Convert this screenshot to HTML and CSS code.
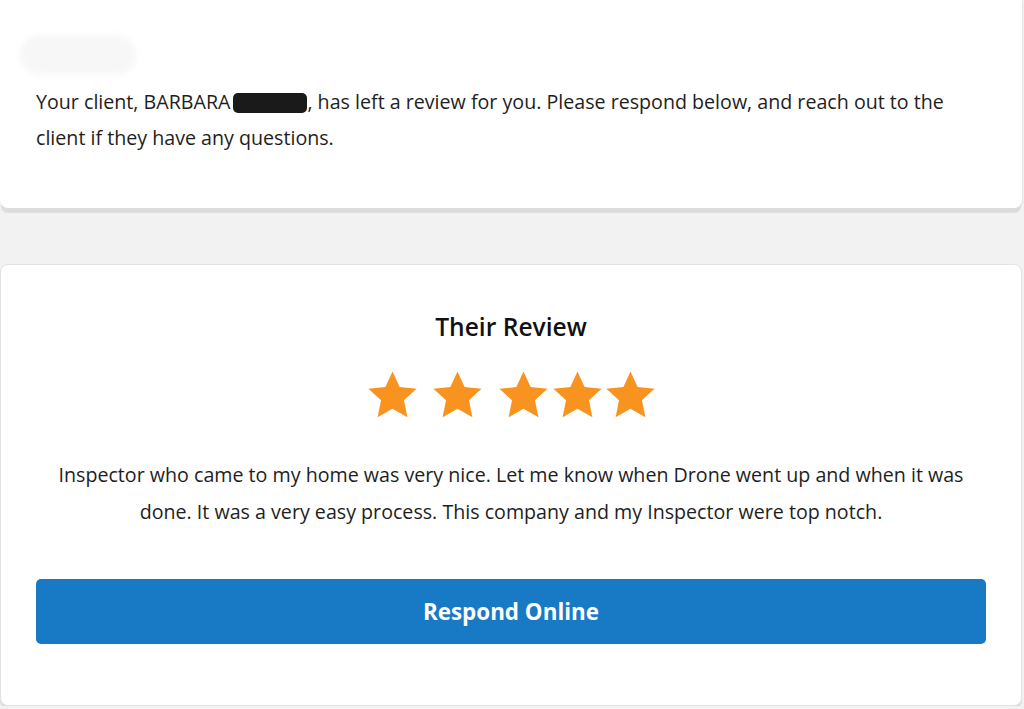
FILE: index.html
```html
<!DOCTYPE html>
<html lang="en">
<head>
<meta charset="utf-8">
<title>Review</title>
<link rel="stylesheet" href="styles.css">
</head>
<body>
<main class="page">
  <section class="card card-intro">
    <div class="redacted-blob"></div>
    <p class="intro-text">Your client, BARBARA<span class="redacted-name" aria-hidden="true"></span>, has left a review for you. Please respond below, and reach out to the client if they have any questions.</p>
  </section>

  <section class="card card-review">
    <h2 class="review-title">Their Review</h2>
    <div class="stars">
      <svg class="star s1" viewBox="0 0 24 24"><polygon points="12,1.5 15.1,8.3 22.5,9.1 17,14.1 18.5,21.5 12,17.8 5.5,21.5 7,14.1 1.5,9.1 8.9,8.3"/></svg>
      <svg class="star s2" viewBox="0 0 24 24"><polygon points="12,1.5 15.1,8.3 22.5,9.1 17,14.1 18.5,21.5 12,17.8 5.5,21.5 7,14.1 1.5,9.1 8.9,8.3"/></svg>
      <svg class="star s3" viewBox="0 0 24 24"><polygon points="12,1.5 15.1,8.3 22.5,9.1 17,14.1 18.5,21.5 12,17.8 5.5,21.5 7,14.1 1.5,9.1 8.9,8.3"/></svg>
      <svg class="star s4" viewBox="0 0 24 24"><polygon points="12,1.5 15.1,8.3 22.5,9.1 17,14.1 18.5,21.5 12,17.8 5.5,21.5 7,14.1 1.5,9.1 8.9,8.3"/></svg>
      <svg class="star s5" viewBox="0 0 24 24"><polygon points="12,1.5 15.1,8.3 22.5,9.1 17,14.1 18.5,21.5 12,17.8 5.5,21.5 7,14.1 1.5,9.1 8.9,8.3"/></svg>
    </div>
    <p class="review-text">Inspector who came to my home was very nice. Let me know when Drone went up and when it was done. It was a very easy process. This company and my Inspector were top notch.</p>
    <a class="respond-btn" href="#">Respond Online</a>
  </section>
</main>
</body>
</html>
```

FILE: styles.css
```css
html, body {
  margin: 0;
  padding: 0;
}
body {
  background: #f2f2f2;
  font-family: "Open Sans", "Noto Sans", "Liberation Sans", sans-serif;
  color: #1e1e1e;
  overflow: hidden;
}
.page {
  width: 1022px;
  display: flex;
  flex-direction: column;
  gap: 56px;
}
.card {
  background: #fff;
  box-sizing: border-box;
}
.card-intro {
  height: 208px;
  padding: 35px 36px 0 36px;
  border-radius: 0 0 8px 8px;
  box-shadow: 0 6px 1px -1px #dcdcdc, 1px 1px 1px #e4e4e4;
}
.redacted-blob {
  width: 116px;
  height: 40px;
  margin-left: -16px;
  border-radius: 20px;
  background: #f7f7f7;
  filter: blur(3px);
}
.intro-text {
  margin: 9px 0 0 0;
  font-size: 19.65px;
  line-height: 36px;
  color: #1e1e1e;
}
.redacted-name {
  display: inline-block;
  width: 74px;
  height: 20px;
  margin-left: 3px;
  vertical-align: -4px;
  background: #1a1a1a;
  border-radius: 5px;
}
.card-review {
  height: 442px;
  border: 1px solid #e2e2e2;
  border-radius: 8px;
  padding: 46px 35px 0 35px;
  display: flex;
  flex-direction: column;
  align-items: center;
  box-shadow: 0 3px 1px #dcdcdc;
}
.review-title {
  margin: 0;
  font-size: 24.6px;
  font-weight: 600;
  line-height: 32px;
  color: #111;
}
.stars {
  display: flex;
  margin-top: 25px;
  height: 54px;
}
.star {
  width: 55px;
  height: 55px;
  fill: #f7931e;
}
.s2 { margin-left: 10px; }
.s3 { margin-left: 11px; }
.s4 { margin-left: -1px; }
.s5 { margin-left: -2px; }
.review-text {
  margin: 34px 0 0 0;
  font-size: 19.65px;
  line-height: 37px;
  text-align: center;
  color: #1e1e1e;
}
.respond-btn {
  margin-top: 49px;
  align-self: stretch;
  height: 65px;
  border-radius: 5px;
  background: #1879c5;
  color: #fff;
  text-decoration: none;
  display: flex;
  align-items: center;
  justify-content: center;
  font-size: 22.4px;
  font-weight: 700;
}
```
